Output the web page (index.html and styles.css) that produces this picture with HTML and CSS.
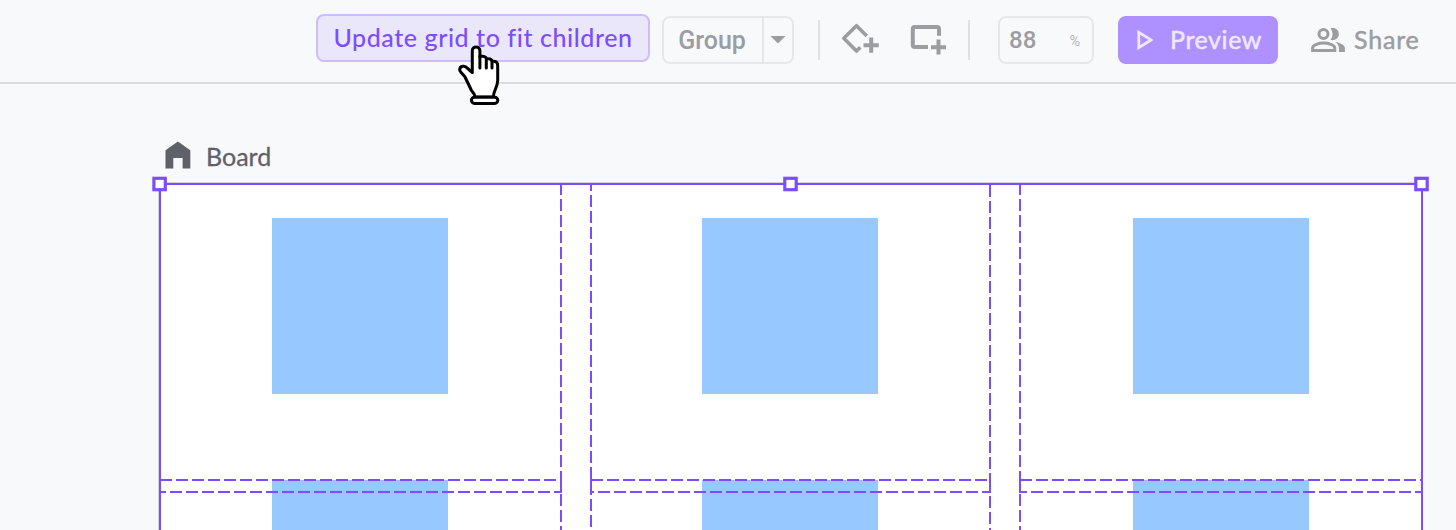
FILE: index.html
```html
<!DOCTYPE html>
<html lang="en">
<head>
<meta charset="utf-8">
<title>Board editor</title>
<link rel="stylesheet" href="styles.css">
</head>
<body>
<header class="toolbar">
  <button class="update"><span>Update grid to fit children</span></button>
  <div class="group"><span class="group-label">Group</span><span class="group-arrow"><svg width="16" height="8" viewBox="0 0 16 8"><path d="M.5 0h15L8 7.6z" fill="#9b9da1"/></svg></span></div>
  <i class="divider"></i>
  <svg class="icon shape" width="40" height="34" viewBox="840 22 40 34"><path d="M866.8 36 856.500 25.700 843.800 38.300 856.500 51 860.300 47.200" fill="none" stroke="#9b9da1" stroke-width="3.600" stroke-linejoin="round"/><path d="M871.2 37.5v15.3M863.5 45.2h15.3" stroke="#9b9da1" stroke-width="4"/></svg>
  <svg class="icon frame" width="38" height="34" viewBox="910 22 38 34"><path d="M939 35.7V29q0-2-2-2h-22.200q-2 0-2 2v16.100q0 2 2 2H928" fill="none" stroke="#9b9da1" stroke-width="4"/><path d="M938.500 39.500v15M931 47.200h15" stroke="#9b9da1" stroke-width="4"/></svg>
  <i class="divider second"></i>
  <div class="zoom"><span>88</span><small>%</small></div>
  <button class="preview"><svg width="18" height="22" viewBox="0 0 18 22"><path d="M2.800 3.200v15.400L15 10.900z" fill="none" stroke="#efe8ff" stroke-width="2.800"/></svg><span>Preview</span></button>
  <div class="share"><svg width="36" height="26" viewBox="1310 27 36 26"><g fill="none" stroke="#9b9da1" stroke-width="3"><circle cx="1323.500" cy="34" r="4.500"/><path d="M1312.600 50.400v-2.500c0-3 6.500-4.800 11-4.800s11.200 1.800 11.200 4.800v2.500z"/></g><path d="M1330.500 28.500c3-1.300 8.300.4 8.300 5.600s-5.300 7-8.300 5.700c2.800-3.500 2.800-7.800 0-11.300zM1335.300 42c5 .8 9.600 3 9.600 6.200V52h-6v-4c0-2.500-1.300-4.500-3.600-6z" fill="#9b9da1"/></svg><span>Share</span></div>
</header>
<main class="canvas">
  <div class="caption"><svg width="26" height="28" viewBox="0 0 26 28"><path d="M.5 9.300 12.900.4 25.300 9.300V27.500h-7.700V17H8.300v10.500H.5z" fill="#5f6168"/></svg><span>Board</span></div>
  <section class="board">
    <div class="tile"></div><div class="tile"></div><div class="tile"></div>
    <div class="tile"></div><div class="tile"></div><div class="tile"></div>
  </section>
</main>
<svg class="overlay" width="1456" height="530" viewBox="0 0 1456 530">
  <path class="edge" d="M160 530V184H1422V530"/>
  <g class="guide">
    <path d="M561 183V483M561 494V530M591 195V530M990 185V485M990 496V530M1020 183V483M1020 494V530"/>
    <path d="M160 480H562M170 492H562M591 480H991M598 492H991M1020 480H1421M1031 492H1421"/>
  </g>
  <path class="joint" d="M561 481V493M591 184V191M591 479V483M990 484V493M1020 481V493M160 492H166M591 492H594M1020 492H1027"/>
  <g class="handle"><rect x="153.900" y="178.300" width="11.400" height="11.400"/><rect x="784.800" y="178.300" width="11.400" height="11.400"/><rect x="1415.800" y="178.300" width="11.400" height="11.400"/></g>
  <g class="pointer">
    <path d="M472.300 70V51c0-5.500 7.600-5.500 7.600 0v5.500q6-1 6.500 2.300 5-.8 5.700 2.500 5.600-.8 5.600 4.500V80c0 8-4.300 10-4.300 17H475c0-3-2-4-3.500-6.500L465 77c-1-2-5.300-5.300-5.300-7 0-4.500 5.300-4.800 8-1.500l4.600 4z"/>
    <path d="M479.900 56v12M486.300 58.500V68M492 61v7" fill="none"/>
    <rect x="471.400" y="97.200" width="26.400" height="6.200" rx="3.100"/>
  </g>
</svg>
</body>
</html>
```
FILE: styles.css
```css
* { box-sizing: border-box; }
body { margin: 0; height: 530px; overflow: hidden; background: #f8f9fb; font-family: Lato, sans-serif; color: #9b9da1; }
button { font: inherit; padding: 0; cursor: pointer; }
svg { display: block; flex: none; }
span { white-space: nowrap; }
.toolbar { height: 84px; padding: 14px 0 0 316px; border-bottom: 2px solid #dadce0; display: flex; align-items: flex-start; }
.update { width: 334px; height: 48px; padding-bottom: 3px; border: 2px solid #cdbcff; border-radius: 8px; background: #ebe7fa; color: #7c4dff; font-size: 25px; font-weight: 500; letter-spacing: .58px; display: flex; align-items: center; justify-content: center; }
.group { width: 132px; height: 48px; margin: 2px 0 0 12px; border: 2px solid #e6e7e9; border-radius: 8px; display: flex; font: 500 25px Roboto, sans-serif; }
.group-label { width: 98px; padding-right: 2px; display: grid; place-items: center; }
.group-arrow { flex: 1; border-left: 2px solid #e6e7e9; display: grid; place-items: center; }
.divider { width: 2px; height: 40px; background: #e0e1e4; margin: 6px 0 0 24px; }
.icon { margin-top: 8px; }
.shape { margin-left: 20px; }
.frame { margin-left: 30px; }
.second { margin-left: 20px; }
.zoom { width: 96px; height: 48px; margin: 2px 0 0 28px; padding: 0 12px 0 9px; border: 2px solid #e6e7e9; border-radius: 8px; display: flex; align-items: center; justify-content: space-between; font: 500 24px Roboto, sans-serif; }
.zoom small { font-size: 14.500px; font-weight: 400; padding-top: 2px; color: #b4b6b9; }
.preview { width: 160px; height: 48px; margin: 2px 0 0 24px; padding-left: 18px; border: 0; border-radius: 8px; background: #ae91ff; color: #efe8ff; font-size: 25px; letter-spacing: .6px; display: flex; align-items: center; gap: 16px; }
.share { height: 48px; margin: 2px 0 0 32px; display: flex; align-items: center; gap: 8px; font-size: 25px; letter-spacing: .8px; }
.preview span, .share span { -webkit-text-stroke: .5px currentColor; margin-bottom: 3px; }
.caption { height: 98px; padding: 57px 0 0 165px; display: flex; gap: 15px; color: #5f6168; font-size: 25px; line-height: 31px; -webkit-text-stroke: .3px currentColor; }
.board { margin-left: 158px; width: 1265px; height: 348px; padding-top: 34.500px; border: 1px solid #d3d4d8; border-bottom: 0; background: #fff; display: grid; grid-template-columns: 429.500px 431px 290px; grid-template-rows: 262px 176px; padding-left: 113px; overflow: hidden; }
.tile { width: 176px; height: 176px; background: #97c8ff; }
.overlay { position: absolute; left: 0; top: 0; pointer-events: none; }
.edge, .guide, .joint { fill: none; stroke: #7c4dff; stroke-width: 2; }
.guide { stroke-dasharray: 12 4; }
.handle { fill: #fff; stroke: #7c4dff; stroke-width: 3.200; }
.pointer { fill: #fff; stroke: #000; stroke-width: 3; stroke-linejoin: round; stroke-linecap: round; }
```
